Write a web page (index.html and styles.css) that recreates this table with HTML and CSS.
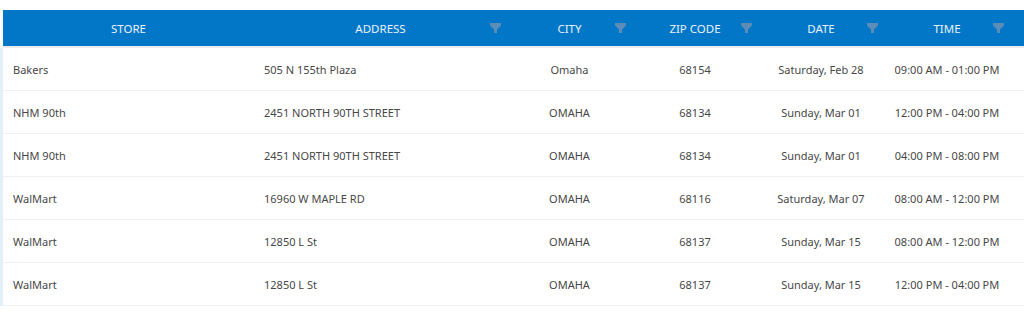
FILE: index.html
```html
<!DOCTYPE html>
<html lang="en">
<head>
<meta charset="utf-8">
<title>Store Schedule</title>
<link rel="stylesheet" href="styles.css">
</head>
<body>
<div class="grid-wrap">
  <div class="head">
    <div class="hcell plain"><span class="htext">STORE</span></div>
    <div class="hcell"><span></span><span class="htext">ADDRESS</span><svg class="funnel" viewBox="0 0 11 10" width="11" height="10"><path d="M0 0H11V2.5L7 6.5V10H4V6.5L0 2.5Z"/></svg></div>
    <div class="hcell"><span></span><span class="htext">CITY</span><svg class="funnel" viewBox="0 0 11 10" width="11" height="10"><path d="M0 0H11V2.5L7 6.5V10H4V6.5L0 2.5Z"/></svg></div>
    <div class="hcell"><span></span><span class="htext">ZIP CODE</span><svg class="funnel" viewBox="0 0 11 10" width="11" height="10"><path d="M0 0H11V2.5L7 6.5V10H4V6.5L0 2.5Z"/></svg></div>
    <div class="hcell"><span></span><span class="htext">DATE</span><svg class="funnel" viewBox="0 0 11 10" width="11" height="10"><path d="M0 0H11V2.5L7 6.5V10H4V6.5L0 2.5Z"/></svg></div>
    <div class="hcell"><span></span><span class="htext">TIME</span><svg class="funnel" viewBox="0 0 11 10" width="11" height="10"><path d="M0 0H11V2.5L7 6.5V10H4V6.5L0 2.5Z"/></svg></div>
    <div class="hfill"></div>
  </div>
  <div class="body">
    <div class="row">
      <div class="cell left">Bakers</div>
      <div class="cell left">505 N 155th Plaza</div>
      <div class="cell">Omaha</div>
      <div class="cell">68154</div>
      <div class="cell">Saturday, Feb 28</div>
      <div class="cell">09:00 AM - 01:00 PM</div>
      <div class="cell fill"></div>
    </div>
    <div class="row">
      <div class="cell left">NHM 90th</div>
      <div class="cell left">2451 NORTH 90TH STREET</div>
      <div class="cell">OMAHA</div>
      <div class="cell">68134</div>
      <div class="cell">Sunday, Mar 01</div>
      <div class="cell">12:00 PM - 04:00 PM</div>
      <div class="cell fill"></div>
    </div>
    <div class="row">
      <div class="cell left">NHM 90th</div>
      <div class="cell left">2451 NORTH 90TH STREET</div>
      <div class="cell">OMAHA</div>
      <div class="cell">68134</div>
      <div class="cell">Sunday, Mar 01</div>
      <div class="cell">04:00 PM - 08:00 PM</div>
      <div class="cell fill"></div>
    </div>
    <div class="row">
      <div class="cell left">WalMart</div>
      <div class="cell left">16960 W MAPLE RD</div>
      <div class="cell">OMAHA</div>
      <div class="cell">68116</div>
      <div class="cell">Saturday, Mar 07</div>
      <div class="cell">08:00 AM - 12:00 PM</div>
      <div class="cell fill"></div>
    </div>
    <div class="row">
      <div class="cell left">WalMart</div>
      <div class="cell left">12850 L St</div>
      <div class="cell">OMAHA</div>
      <div class="cell">68137</div>
      <div class="cell">Sunday, Mar 15</div>
      <div class="cell">08:00 AM - 12:00 PM</div>
      <div class="cell fill"></div>
    </div>
    <div class="row">
      <div class="cell left">WalMart</div>
      <div class="cell left">12850 L St</div>
      <div class="cell">OMAHA</div>
      <div class="cell">68137</div>
      <div class="cell">Sunday, Mar 15</div>
      <div class="cell">12:00 PM - 04:00 PM</div>
      <div class="cell fill"></div>
    </div>
  </div>
</div>
</body>
</html>
```
FILE: styles.css
```css
html, body {
  margin: 0;
  padding: 0;
  background: #ffffff;
}

body {
  font-family: "Noto Sans", "Open Sans", sans-serif;
  font-size: 11px;
  color: #474747;
  overflow: hidden;
}

.grid-wrap {
  padding-top: 10px;
}

.head {
  display: grid;
  grid-template-columns: 251px 253px 125px 126px 126px 126px 1fr;
  margin-left: 3px;
  height: 36px;
  background: #0277c8;
  color: #e9f1f9;
  border-bottom: 2px solid #ececec;
}

.hcell {
  display: grid;
  grid-template-columns: 1fr auto 1fr;
  align-items: center;
  padding-right: 6px;
  padding-left: 6px;
}

.hcell.plain {
  grid-template-columns: 1fr;
  justify-items: center;
  padding: 0;
}

.htext {
  font-size: 11.5px;
  white-space: nowrap;
}

.funnel {
  justify-self: end;
  fill: #5b8db6;
  display: block;
}

.body {
  border-left: 3px solid #e5effa;
}

.row {
  display: grid;
  grid-template-columns: 251px 253px 125px 126px 126px 126px 1fr;
  height: 42px;
  border-bottom: 1px solid #f0f0f0;
  align-items: center;
}

.cell {
  text-align: center;
  white-space: nowrap;
}

.cell.left {
  text-align: left;
  padding-left: 10px;
}
```
